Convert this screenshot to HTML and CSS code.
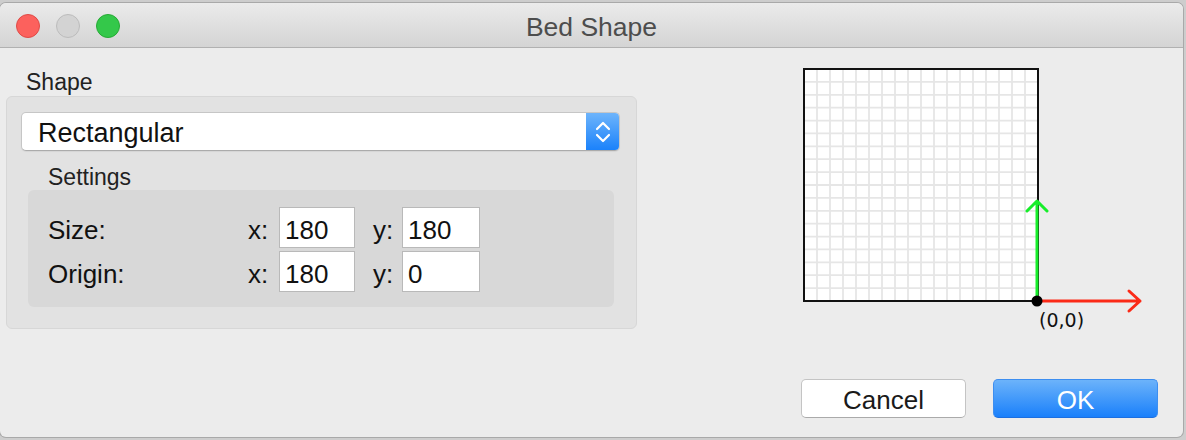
FILE: index.html
```html
<!DOCTYPE html>
<html>
<head>
<meta charset="utf-8">
<title>Bed Shape</title>
<link rel="stylesheet" href="styles.css">
</head>
<body>
<div class="window">
  <div class="titlebar">
    <div class="lights">
      <span class="light red"></span>
      <span class="light gray"></span>
      <span class="light green"></span>
    </div>
    <div class="title">Bed Shape</div>
  </div>
  <div class="content">
    <div class="left">
      <div class="box-title">Shape</div>
      <div class="group">
        <div class="popup">
          <span class="popup-text">Rectangular</span>
          <span class="popup-arrows">
            <svg width="16" height="24" viewBox="0 0 16 24"><path d="M2 9 L8 3 L14 9 M2 15 L8 21 L14 15" fill="none" stroke="#fff" stroke-width="2.2" stroke-linecap="round" stroke-linejoin="round"/></svg>
          </span>
        </div>
        <div class="box-title sub">Settings</div>
        <div class="settings">
          <div class="row">
            <span class="lbl">Size:</span>
            <span class="axis">x:</span>
            <span class="field w76">180</span>
            <span class="axis y">y:</span>
            <span class="field w78">180</span>
          </div>
          <div class="row">
            <span class="lbl">Origin:</span>
            <span class="axis">x:</span>
            <span class="field w76">180</span>
            <span class="axis y">y:</span>
            <span class="field w78">0</span>
          </div>
        </div>
      </div>
    </div>
    <div class="right">
      <svg class="preview" width="360" height="275" viewBox="0 0 360 275">
        <rect x="14" y="9" width="234" height="232" fill="#fff"/>
        <path d="M27 9V241M40 9V241M53 9V241M66 9V241M79 9V241M92 9V241M105 9V241M118 9V241M131 9V241M144 9V241M157 9V241M170 9V241M183 9V241M196 9V241M209 9V241M222 9V241M235 9V241M14 21.9H248M14 34.8H248M14 47.7H248M14 60.6H248M14 73.4H248M14 86.3H248M14 99.2H248M14 112.1H248M14 125H248M14 137.9H248M14 150.8H248M14 163.7H248M14 176.6H248M14 189.4H248M14 202.3H248M14 215.2H248M14 228.1H248" stroke="#e6e6e6" stroke-width="1.8" fill="none"/>
        <rect x="14" y="9" width="234" height="232" fill="none" stroke="#111" stroke-width="2"/>
        <path d="M247 241V142M237 151L247 141L257 151" fill="none" stroke="#16ee2a" stroke-width="3" stroke-linecap="round" stroke-linejoin="round"/>
        <path d="M248 241H350M339 231L350 241L339 251" fill="none" stroke="#fb2a17" stroke-width="3" stroke-linecap="round" stroke-linejoin="round"/>
        <circle cx="247" cy="241" r="5.5" fill="#000"/>
        <text x="249" y="267" class="origin-text">(0,0)</text>
      </svg>
      <div class="buttons">
        <button class="btn cancel">Cancel</button>
        <button class="btn ok">OK</button>
      </div>
    </div>
  </div>
</div>
</body>
</html>
```
FILE: styles.css
```css
html, body {
  margin: 0;
  padding: 0;
}
body {
  width: 1186px;
  height: 440px;
  background: #cdcdcd;
  overflow: hidden;
  font-family: "Liberation Sans", Arial, sans-serif;
  color: #1a1a1a;
}
.window {
  margin-top: 3px;
  width: 1183px;
  height: 434px;
  background: #ececec;
  border-radius: 6px;
  box-shadow: 0 0 0 1px #a9a9a9;
  overflow: hidden;
  display: flex;
  flex-direction: column;
}
.titlebar {
  height: 44px;
  flex: none;
  background: linear-gradient(#ebebeb, #d4d4d4);
  border-bottom: 1px solid #b1b1b1;
  display: flex;
  align-items: center;
  position: relative;
}
.lights {
  display: flex;
  gap: 16px;
  padding-left: 16px;
  padding-top: 1px;
}
.light {
  width: 22px;
  height: 22px;
  border-radius: 50%;
  border: 1px solid;
}
.light.red { background: #fc615d; border-color: #df4b47; }
.light.gray { background: #d3d3d3; border-color: #bcbcbc; }
.light.green { background: #34c84a; border-color: #27aa35; }
.title {
  position: absolute;
  left: 0;
  right: 0;
  top: 0;
  bottom: 0;
  box-sizing: border-box;
  padding-top: 4px;
  display: flex;
  align-items: center;
  justify-content: center;
  font-size: 26.5px;
  color: #4d4d4d;
  pointer-events: none;
}
.content {
  flex: 1;
  display: flex;
}
.left {
  width: 631px;
  margin-left: 6px;
}
.box-title {
  font-size: 23px;
  line-height: 26px;
  height: 26px;
  margin: 21px 0 1px 20px;
  color: #222;
}
.box-title.sub {
  margin: 13px 0 0 27px;
}
.group {
  box-sizing: border-box;
  height: 233px;
  background: #e2e2e2;
  border: 1px solid #d7d7d7;
  border-radius: 6px;
  padding: 15px 16px 0 14px;
}
.popup {
  box-sizing: border-box;
  width: 599px;
  height: 39px;
  background: #fff;
  border: 1px solid #c6c6c6;
  border-bottom-color: #ababab;
  border-radius: 5px;
  display: flex;
  align-items: center;
  overflow: hidden;
  box-shadow: 0 1px 1px rgba(0,0,0,0.06);
}
.popup-text {
  flex: 1;
  font-size: 27px;
  padding-left: 16px;
  padding-top: 4px;
  color: #111;
}
.popup-arrows {
  width: 33px;
  height: 100%;
  background: linear-gradient(#6db4fb, #1b82fb);
  display: flex;
  align-items: center;
  justify-content: center;
}
.settings {
  box-sizing: border-box;
  width: 586px;
  height: 117px;
  margin-left: 7px;
  background: #d8d8d8;
  border-radius: 6px;
  padding: 17px 0 0 20px;
  display: flex;
  flex-direction: column;
  gap: 3px;
}
.row {
  display: flex;
  align-items: center;
  height: 41px;
  font-size: 26px;
  color: #111;
}
.lbl {
  width: 200px;
  padding-top: 6px;
}
.axis {
  width: 31px;
  padding-top: 6px;
}
.axis.y {
  width: 29px;
  margin-left: 18px;
}
.field {
  box-sizing: border-box;
  height: 41px;
  background: #fff;
  border: 1px solid #b9b9b9;
  padding-left: 5px;
  padding-top: 6px;
  display: flex;
  align-items: center;
}
.w76 { width: 76px; }
.w78 { width: 78px; }
.right {
  flex: 1;
  display: flex;
  flex-direction: column;
}
.preview {
  display: block;
  margin: 12px 0 0 153px;
}
.origin-text {
  font-family: "DejaVu Sans", sans-serif;
  font-size: 19px;
  fill: #111;
}
.buttons {
  display: flex;
  justify-content: flex-end;
  gap: 27px;
  padding-right: 25px;
  margin-top: 44px;
}
.btn {
  box-sizing: border-box;
  width: 165px;
  height: 39px;
  border-radius: 5px;
  font-family: "Liberation Sans", Arial, sans-serif;
  font-size: 26px;
  padding: 3px 0 0 0;
  margin: 0;
}
.btn.cancel {
  background: #fff;
  border: 1px solid #c4c4c4;
  border-bottom-color: #aaaaaa;
  color: #1a1a1a;
}
.btn.ok {
  background: linear-gradient(#6cb3fa, #1a80fb);
  border: 1px solid #3d8ef0;
  border-bottom-color: #1c6fe0;
  color: #fff;
}
```
